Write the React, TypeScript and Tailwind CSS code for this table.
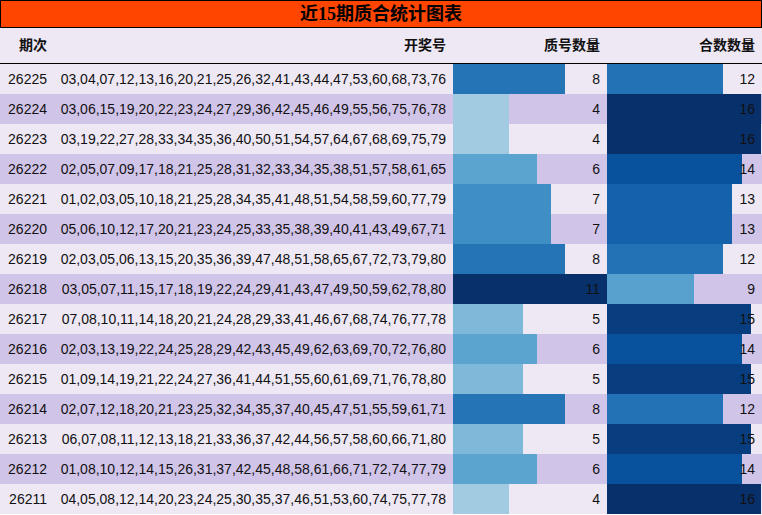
import React from "react";

type Row = { p: string; n: string; a: number; b: number };

const rows: Row[] = [
  { p: "26225", n: "03,04,07,12,13,16,20,21,25,26,32,41,43,44,47,53,60,68,73,76", a: 8, b: 12 },
  { p: "26224", n: "03,06,15,19,20,22,23,24,27,29,36,42,45,46,49,55,56,75,76,78", a: 4, b: 16 },
  { p: "26223", n: "03,19,22,27,28,33,34,35,36,40,50,51,54,57,64,67,68,69,75,79", a: 4, b: 16 },
  { p: "26222", n: "02,05,07,09,17,18,21,25,28,31,32,33,34,35,38,51,57,58,61,65", a: 6, b: 14 },
  { p: "26221", n: "01,02,03,05,10,18,21,25,28,34,35,41,48,51,54,58,59,60,77,79", a: 7, b: 13 },
  { p: "26220", n: "05,06,10,12,17,20,21,23,24,25,33,35,38,39,40,41,43,49,67,71", a: 7, b: 13 },
  { p: "26219", n: "02,03,05,06,13,15,20,35,36,39,47,48,51,58,65,67,72,73,79,80", a: 8, b: 12 },
  { p: "26218", n: "03,05,07,11,15,17,18,19,22,24,29,41,43,47,49,50,59,62,78,80", a: 11, b: 9 },
  { p: "26217", n: "07,08,10,11,14,18,20,21,24,28,29,33,41,46,67,68,74,76,77,78", a: 5, b: 15 },
  { p: "26216", n: "02,03,13,19,22,24,25,28,29,42,43,45,49,62,63,69,70,72,76,80", a: 6, b: 14 },
  { p: "26215", n: "01,09,14,19,21,22,24,27,36,41,44,51,55,60,61,69,71,76,78,80", a: 5, b: 15 },
  { p: "26214", n: "02,07,12,18,20,21,23,25,32,34,35,37,40,45,47,51,55,59,61,71", a: 8, b: 12 },
  { p: "26213", n: "06,07,08,11,12,13,18,21,33,36,37,42,44,56,57,58,60,66,71,80", a: 5, b: 15 },
  { p: "26212", n: "01,08,10,12,14,15,26,31,37,42,45,48,58,61,66,71,72,74,77,79", a: 6, b: 14 },
  { p: "26211", n: "04,05,08,12,14,20,23,24,25,30,35,37,46,51,53,60,74,75,77,78", a: 4, b: 16 },
];

const primeColor: Record<number, string> = {
  4: "#a2cbe2",
  5: "#7fb9da",
  6: "#5ba4cf",
  7: "#3f8fc5",
  8: "#2474b6",
  11: "#08306b",
};
const compColor: Record<number, string> = {
  9: "#58a1cf",
  12: "#2272b5",
  13: "#1562aa",
  14: "#08519c",
  15: "#083e80",
  16: "#08306b",
};

const font = { fontFamily: '"Liberation Sans", "Noto Sans CJK SC", sans-serif' };

function BarCell({ v, w, color }: { v: number; w: number; color: string }) {
  return (
    <div className="relative h-[30px] flex items-center justify-end pr-[7px]">
      <div className="absolute left-0 top-0 h-full" style={{ width: w, background: color }} />
      <span className="relative">{v}</span>
    </div>
  );
}

export default function App() {
  return (
    <div className="w-[762px] h-[515px] bg-white text-[14px] text-[#111]" style={font}>
      <div
        className="h-[28px] bg-[#FF4500] border border-black flex items-center justify-center font-bold text-[18px] text-black"
        style={{ fontFamily: '"Liberation Serif", "Noto Sans CJK SC", serif' }}
      >
        近15期质合统计图表
      </div>
      <div className="grid grid-cols-[54px_399px_154px_155px] h-[36px] bg-[#EEE8F5] border-b border-black font-bold items-center">
        <div className="text-right pr-[7px]">期次</div>
        <div className="text-right pr-[7px]">开奖号</div>
        <div className="text-right pr-[7px]">质号数量</div>
        <div className="text-right pr-[7px]">合数数量</div>
      </div>
      {rows.map((r, i) => (
        <div
          key={r.p}
          className={
            "grid grid-cols-[54px_399px_154px_155px] h-[30px] items-center " +
            (i % 2 === 0 ? "bg-[#EEE8F5]" : "bg-[#D1C4E9]")
          }
        >
          <div className="text-right pr-[7px]">{r.p}</div>
          <div className="text-right pr-[7px]">{r.n}</div>
          <BarCell v={r.a} w={Math.round(r.a * 14)} color={primeColor[r.a]} />
          <BarCell v={r.b} w={Math.round((r.b * 154) / 16)} color={compColor[r.b]} />
        </div>
      ))}
    </div>
  );
}
